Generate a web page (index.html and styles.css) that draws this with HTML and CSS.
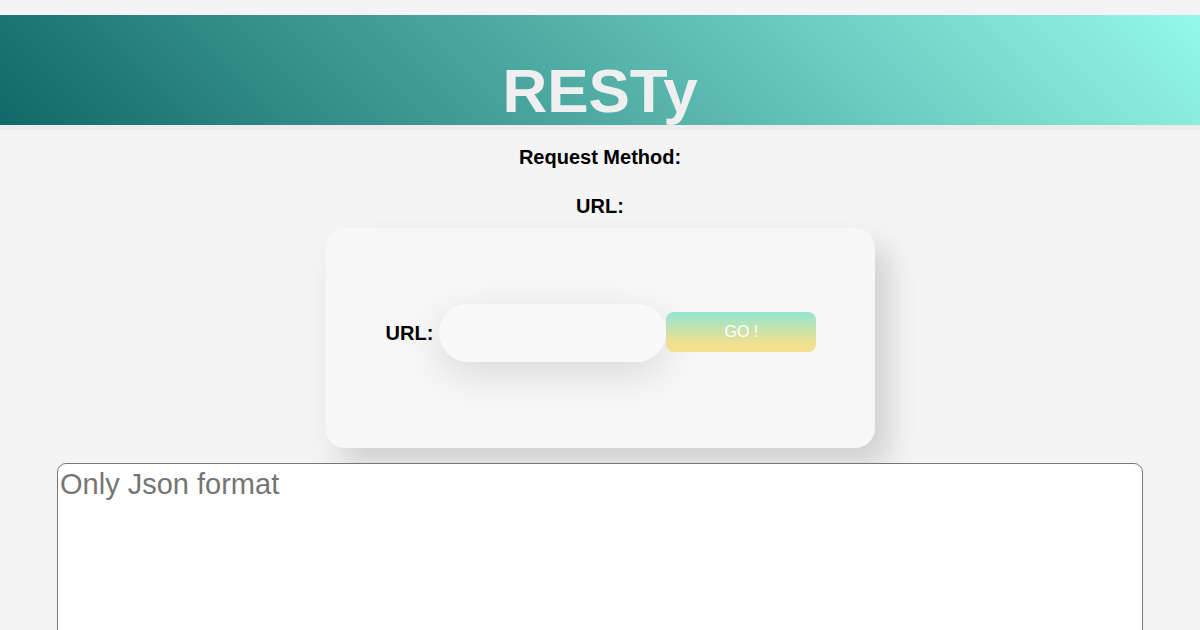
FILE: index.html
```html
<!DOCTYPE html>
<html lang="en">
<head>
  <meta charset="UTF-8">
  <title>RESTy</title>
  <link rel="stylesheet" href="styles.css">
</head>
<body>

<header class="banner">
  <h1>RESTy</h1>
</header>

<main class="app">
  <div class="summary">
    <p class="summary-line">Request Method:</p>
    <p class="summary-line">URL:</p>
  </div>

  <form class="card" onsubmit="return false">
    <label class="url-label" for="url">URL:</label>
    <input class="url-input" id="url" type="text">
    <button class="go-btn" type="submit">GO !</button>
  </form>

  <textarea class="body-input" placeholder="Only Json format"></textarea>
</main>

</body>
</html>
```

FILE: styles.css
```css
body {
  margin: 0;
  background: #f4f4f4;
  font-family: 'Liberation Sans', Arial, sans-serif;
  color: #000;
}

.banner {
  margin-top: 15px;
  height: 110px;
  padding-top: 45px;
  box-sizing: border-box;
  overflow: hidden;
  text-align: center;
  background: linear-gradient(45deg, #116868, #95f9e7);
  box-shadow: 0 5px 0 #ececec;
}

.banner h1 {
  margin: 0;
  font-size: 62px;
  line-height: 62px;
  font-weight: bold;
  color: #efefef;
}

.app {
  display: flex;
  flex-direction: column;
  align-items: center;
}

.summary {
  display: flex;
  flex-direction: column;
  align-items: center;
  gap: 27px;
  padding-top: 21px;
}

.summary-line {
  margin: 0;
  font-size: 20px;
  line-height: 22px;
  font-weight: bold;
}

.card {
  margin-top: 11px;
  width: 550px;
  height: 220px;
  padding-bottom: 10px;
  box-sizing: border-box;
  display: flex;
  align-items: center;
  justify-content: center;
  background: #f7f7f7;
  border-radius: 20px;
  box-shadow: 14px 18px 30px rgba(0, 0, 0, 0.15);
}

.url-label {
  font-size: 20px;
  font-weight: bold;
  margin-right: 6px;
  margin-left: 2px;
}

.url-input {
  width: 227px;
  height: 58px;
  box-sizing: border-box;
  border: none;
  border-radius: 29px;
  background: #f9f9f9;
  box-shadow: 0 12px 40px rgba(0, 0, 0, 0.12);
  outline: none;
}

.go-btn {
  width: 150px;
  height: 40px;
  margin-bottom: 2px;
  border: none;
  border-radius: 8px;
  background: linear-gradient(to bottom, #92e5d1, #f2e08e 80%);
  color: #fff;
  font-family: 'Liberation Sans', Arial, sans-serif;
  font-size: 16px;
  cursor: pointer;
}

.body-input {
  margin-top: 15px;
  width: 1086px;
  height: 300px;
  box-sizing: border-box;
  padding: 4px 2px 2px;
  border: 1px solid #767676;
  border-radius: 9px;
  background: #fff;
  font-family: 'Liberation Sans', Arial, sans-serif;
  font-size: 29px;
  resize: none;
}

.body-input::placeholder {
  color: #757575;
}
```
